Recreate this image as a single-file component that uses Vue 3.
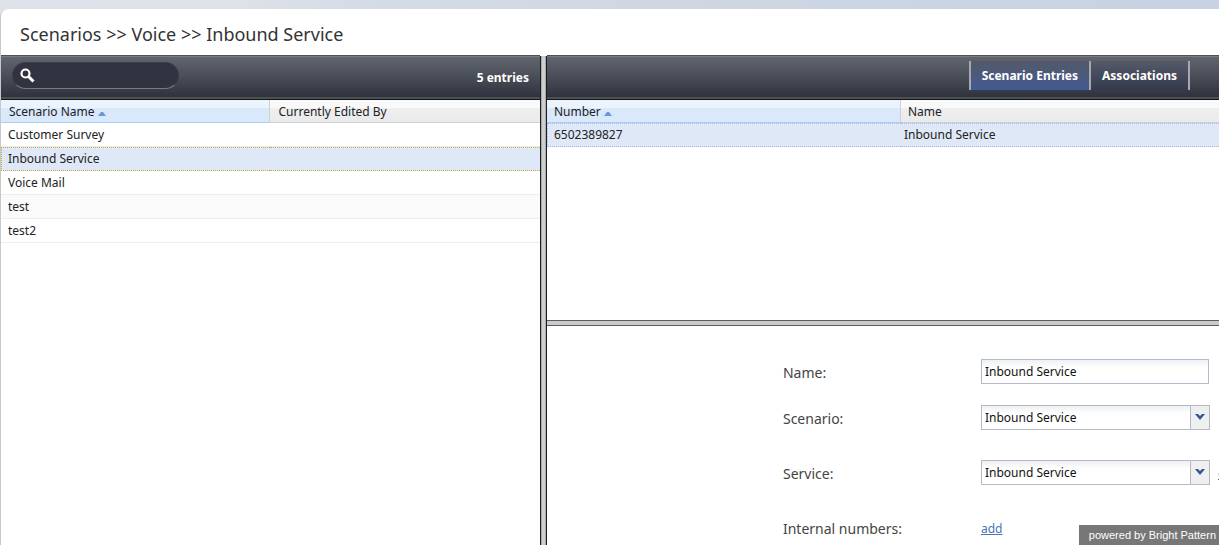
<script setup>
import { ref } from 'vue'

const search = ref('')
const scenarios = ['Customer Survey', 'Inbound Service', 'Voice Mail', 'test', 'test2']
const selected = ref('Inbound Service')
const tabs = ['Scenario Entries', 'Associations']
const activeTab = ref('Scenario Entries')
const name = ref('Inbound Service')
const scenario = ref('Inbound Service')
const service = ref('Inbound Service')
</script>

<template>
  <div class="page">
    <main class="panel">
      <h1 class="title">Scenarios &gt;&gt; Voice &gt;&gt; Inbound Service</h1>
      <div class="body">
        <section class="left">
          <div class="toolbar">
            <label class="search">
              <svg width="16" height="16" viewBox="0 0 16 16" aria-hidden="true">
                <circle cx="5.5" cy="5.5" r="4" fill="none" stroke="#fff" stroke-width="2.2" />
                <path d="M8.5 8.5l5 5" stroke="#fff" stroke-width="3" />
              </svg>
              <input v-model="search" type="text" aria-label="Search scenarios" />
            </label>
            <span class="count">5 entries</span>
          </div>
          <table class="grid scenarios">
            <thead>
              <tr>
                <th class="sorted">Scenario Name
                  <svg width="8" height="4" viewBox="0 0 8 4" aria-hidden="true"><path d="M0 4L3 0h2l3 4z" fill="#6a97d3" /></svg>
                </th>
                <th>Currently Edited By</th>
              </tr>
            </thead>
            <tbody>
              <tr v-for="(s, i) in scenarios" :key="s" :class="{ selected: s === selected, alt: i % 2 === 1 }" @click="selected = s">
                <td>{{ s }}</td>
                <td></td>
              </tr>
            </tbody>
          </table>
        </section>
        <div class="split-v"></div>
        <section class="right">
          <div class="upper">
            <div class="toolbar">
              <nav class="tabs">
                <button v-for="t in tabs" :key="t" type="button" :class="{ active: t === activeTab }" @click="activeTab = t">{{ t }}</button>
              </nav>
            </div>
            <table class="grid entries">
              <thead>
                <tr>
                  <th class="sorted">Number
                    <svg width="8" height="4" viewBox="0 0 8 4" aria-hidden="true"><path d="M0 4L3 0h2l3 4z" fill="#6a97d3" /></svg>
                  </th>
                  <th>Name</th>
                </tr>
              </thead>
              <tbody>
                <tr class="selected">
                  <td>6502389827</td>
                  <td>Inbound Service</td>
                </tr>
              </tbody>
            </table>
          </div>
          <div class="split-h"></div>
          <form class="form" @submit.prevent>
            <div class="row short">
              <label for="name">Name:</label>
              <input id="name" v-model="name" class="field" type="text" />
            </div>
            <div class="row">
              <label for="scenario">Scenario:</label>
              <div class="combo">
                <select id="scenario" v-model="scenario"><option>Inbound Service</option></select>
                <span class="trigger"><svg width="10" height="6" viewBox="0 0 10 6" aria-hidden="true"><path d="M0 0h3l2 2 2-2h3L5 6z" fill="#34549a" /></svg></span>
              </div>
            </div>
            <div class="row">
              <label for="service">Service:</label>
              <div class="combo">
                <select id="service" v-model="service"><option>Inbound Service</option></select>
                <span class="trigger"><svg width="10" height="6" viewBox="0 0 10 6" aria-hidden="true"><path d="M0 0h3l2 2 2-2h3L5 6z" fill="#34549a" /></svg></span>
              </div>
              <a href="#" class="edit">edit</a>
            </div>
            <div class="row">
              <span class="caption">Internal numbers:</span>
              <a href="#">add</a>
            </div>
          </form>
        </section>
      </div>
    </main>
    <div class="powered">powered by Bright Pattern</div>
  </div>
</template>

<style>
body {
  overflow: hidden;
}
</style>

<style scoped>
* {
  box-sizing: border-box;
}
.page {
  position: relative;
  display: flex;
  flex-direction: column;
  height: 100vh;
  padding-top: 9px;
  overflow: hidden;
  background: linear-gradient(90deg, #dfe2ea 0%, #dde1e8 20%, #d3dbe5 32%, #d0d7e0 55%, #cad4e3 75%, #c8d2e2 100%);
  font: 12px/16px "Noto Sans", sans-serif;
  color: #222;
}
.panel {
  flex: 1;
  min-height: 0;
  display: flex;
  flex-direction: column;
  background: #fff;
  border-left: 1px solid #c8c8c8;
  border-radius: 8px 0 0 0;
}
.title {
  margin: 0;
  padding: 13px 19px 9px;
  font-size: 18px;
  line-height: 24px;
  font-weight: 400;
  color: #333;
}
.body {
  flex: 1;
  min-height: 0;
  display: flex;
}
.left {
  flex: 0 0 44.25%;
  min-width: 0;
}
.right {
  flex: 1;
  min-width: 0;
  display: flex;
  flex-direction: column;
}
.toolbar {
  height: 45px;
  display: flex;
  align-items: center;
  justify-content: space-between;
  padding: 0 11px;
  background: linear-gradient(#626671, #4b4f59 45%, #2d303c);
  border-top: 1px solid #505157;
  border-bottom: 1px solid #16171b;
  box-shadow: inset 0 1px #7b7f7a, inset 0 -2px #4b5150;
}
.search {
  display: flex;
  align-items: center;
  width: 167px;
  height: 27px;
  margin-bottom: 4px;
  padding: 0 12px 0 7px;
  border-radius: 14px;
  background: #313440;
  border: 1px solid #3b3e49;
  border-bottom-color: #777b86;
}
.search input {
  flex: 1;
  min-width: 0;
  border: 0;
  outline: 0;
  background: transparent;
  color: #fff;
  font: inherit;
}
.count {
  font-weight: 700;
  color: #fff;
}
.split-v {
  flex: 0 0 7px;
  margin-top: 1px;
  border: solid #1c1d22;
  border-width: 0 1px;
  background: linear-gradient(90deg, #a9abab 1px, #cdcfcf 1px, #cdcfcf 4px, #a9abab 4px);
}
.split-h {
  flex: 0 0 6px;
  border: solid #5b5b60;
  border-width: 1px 0;
  background: #cacacd;
}
.grid {
  width: 100%;
  table-layout: fixed;
  border-collapse: separate;
  border-spacing: 0;
}
.grid th {
  height: 23px;
  padding: 2px 7px 0;
  text-align: left;
  font-weight: 400;
  background: linear-gradient(#f9f9f9 8px, #efeff0 8px, #e9eaeb);
  border-bottom: 1px solid #d0d0d0;
  border-right: 1px solid #d0d0d0;
}
.grid th:last-child {
  border-right: 0;
}
.grid th.sorted {
  background: linear-gradient(#ebf3fd 8px, #d9e8fb 8px);
  border-bottom-color: #aaccf6;
}
.scenarios th {
  padding-left: 8px;
}
.grid td {
  height: 24px;
  padding: 0 7px;
  border: solid #ededed;
  border-width: 0 0 1px;
}
.grid .alt td {
  background: #fafafa;
}
.grid .selected td {
  background: #dfe8f6;
  border-width: 1px 0;
  border-style: dotted;
  border-color: #a3bae9;
}
.grid .selected td:first-child {
  padding-left: 6px;
  border-left-width: 1px;
}
.grid.scenarios .selected td {
  border-color: #cbaa42;
}
.entries th:first-child {
  width: 354px;
}
.entries td:last-child {
  padding-left: 3px;
}
.upper {
  flex: 0 0 54%;
}
.tabs {
  display: flex;
  margin: 0 18px 4px auto;
  border-right: 2px solid #a5a8ae;
}
.tabs button {
  height: 29px;
  padding: 0 11px;
  border: 0;
  border-left: 2px solid #a5a8ae;
  background: linear-gradient(#555a68, #343a4e);
  color: #fff;
  font: 700 12px/16px "Noto Sans", sans-serif;
}
.tabs button.active {
  background: linear-gradient(#535967, #435a91);
}
.form {
  flex: 1;
  min-height: 0;
  padding: 33px 0 0 236px;
  overflow: hidden;
}
.row {
  display: flex;
  align-items: flex-start;
  height: 55px;
  white-space: nowrap;
}
.row.short {
  height: 46px;
}
.row label,
.caption {
  flex: 0 0 198px;
  font-size: 14px;
  line-height: 28px;
  color: #444;
}
.row a {
  line-height: 28px;
  color: #4674b8;
}
.row .edit {
  margin-left: 8px;
}
.field,
.combo {
  flex: 0 0 228px;
  height: 25px;
  border: 1px solid #b5b8c8;
  background: linear-gradient(#eef1f1, #fff 8px);
}
.field {
  padding: 0 3px;
  font: inherit;
  color: #111;
}
.combo {
  flex-basis: 229px;
  display: grid;
  grid-template-columns: 1fr 19px;
}
.combo select {
  grid-area: 1 / 1 / 2 / 3;
  appearance: none;
  padding: 2px 22px 0 3px;
  border: 0;
  background: transparent;
  font: inherit;
  color: #111;
}
.trigger {
  grid-area: 1 / 2;
  display: flex;
  justify-content: center;
  padding-top: 8px;
  border-left: 1px solid #b5b8c8;
  background: #efeff0;
  pointer-events: none;
}
.powered {
  position: absolute;
  right: 0;
  bottom: 0;
  padding: 0 3px 0 10px;
  background: #777;
  color: #fff;
  font: 11px/20px "Liberation Sans", Arial, sans-serif;
}
</style>
